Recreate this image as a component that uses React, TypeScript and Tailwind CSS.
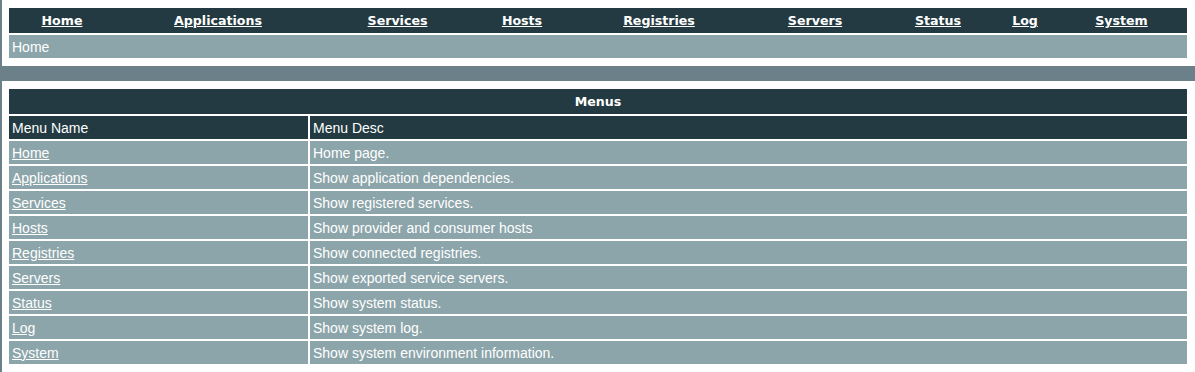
import React from 'react';

const NAV = [
  { name: 'Home', w: 'w-[106px]' },
  { name: 'Applications', w: 'w-[206px]' },
  { name: 'Services', w: 'w-[153px]' },
  { name: 'Hosts', w: 'w-[96px]' },
  { name: 'Registries', w: 'w-[178px]' },
  { name: 'Servers', w: 'w-[134px]' },
  { name: 'Status', w: 'w-[112px]' },
  { name: 'Log', w: 'w-[62px]' },
  { name: 'System', w: 'flex-1' },
];

const MENUS = [
  ['Home', 'Home page.'],
  ['Applications', 'Show application dependencies.'],
  ['Services', 'Show registered services.'],
  ['Hosts', 'Show provider and consumer hosts'],
  ['Registries', 'Show connected registries.'],
  ['Servers', 'Show exported service servers.'],
  ['Status', 'Show system status.'],
  ['Log', 'Show system log.'],
  ['System', 'Show system environment information.'],
];

const bold = "font-['DejaVu_Sans',Verdana,sans-serif] font-bold text-[12.6px]";

export default function App() {
  return (
    <div className="min-h-[372px] bg-white text-white text-[14px] font-['Liberation_Sans',Arial,sans-serif]">
      {/* header frame */}
      <div className="border-l-2 border-[#6c808a] pl-[7px] pr-[8px] pt-[8px] pb-[8px] flex flex-col gap-[2px]">
        <div className="flex h-[25px] bg-[#233a42] pt-[2px]">
          {NAV.map(n => (
            <div key={n.name} className={`${n.w} flex items-center justify-center`}>
              <a href="#" className={`${bold} underline text-white`}>{n.name}</a>
            </div>
          ))}
        </div>
        <div className="h-[23px] bg-[#8ca5aa] flex items-center px-[3px] pt-[1px]">Home</div>
      </div>

      <div className="h-[15px] bg-[#6c808a]" />

      {/* content */}
      <div className="border-l-2 border-[#6c808a] pl-[7px] pr-[8px] pt-[8px] pb-[8px] min-h-[291px]">
        <div className="grid grid-cols-[299px_1fr] gap-[2px]">
          <div className={`col-span-2 h-[25px] bg-[#233a42] flex items-center justify-center pt-[2px] ${bold}`}>Menus</div>
          <div className="h-[23px] bg-[#233a42] flex items-center px-[3px] pt-[1px]">Menu Name</div>
          <div className="h-[23px] bg-[#233a42] flex items-center px-[3px] pt-[1px]">Menu Desc</div>
          {MENUS.map(([name, desc]) => (
            <React.Fragment key={name}>
              <div className="h-[23px] bg-[#8ca5aa] flex items-center px-[3px] pt-[1px]">
                <a href="#" className="underline text-white">{name}</a>
              </div>
              <div className="h-[23px] bg-[#8ca5aa] flex items-center px-[3px] pt-[1px]">{desc}</div>
            </React.Fragment>
          ))}
        </div>
      </div>
    </div>
  );
}
